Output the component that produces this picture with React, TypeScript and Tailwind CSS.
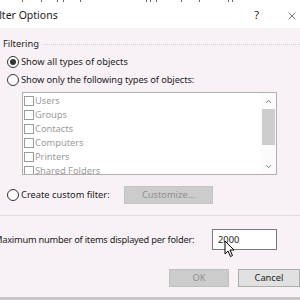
import { ChevronUp, ChevronDown, X } from "lucide-react";

const items = ["Users", "Groups", "Contacts", "Computers", "Printers", "Shared Folders"];

// bits of the window behind, peeking over the top edge
const marks = [22, 41, 57, 63, 80, 146, 150, 156, 181, 199, 228, 232];

function Radio({ checked }: { checked?: boolean }) {
  return (
    <span className="flex h-[12px] w-[12px] shrink-0 items-center justify-center rounded-full border border-[#333] bg-white">
      {checked && <span className="h-[6px] w-[6px] rounded-full bg-[#333]" />}
    </span>
  );
}

export default function App() {
  return (
    <div
      className="h-[300px] w-[300px] overflow-hidden bg-[#f8f2f6] text-[9.3px] text-[#1c1c1c]"
      style={{ fontFamily: '"Noto Sans", "Open Sans", sans-serif' }}
    >
      <div className="flex h-[3px] bg-white">
        {marks.map((x, i) => (
          <span
            key={i}
            className="h-[2px] w-[1px] bg-[#666]"
            style={{ marginLeft: i === 0 ? x : x - marks[i - 1] - 1 }}
          />
        ))}
      </div>

      {/* title bar */}
      <div className="flex h-[25px] items-center bg-white">
        <span className="-ml-[9px] text-[10.5px]">Filter Options</span>
        <span className="ml-auto text-[11px]">?</span>
        <X className="ml-[27px] mr-[2px] h-[12px] w-[12px]" strokeWidth={1.2} />
      </div>

      <div className="flex flex-col">
        {/* Filtering group */}
        <div className="mt-[9px] flex h-[14px] items-center pl-[3px]">
          <span>Filtering</span>
          <span className="ml-[4px] flex-1 border-t border-dotted border-[#d6d0d4]" />
        </div>

        <div className="mt-[2px] flex h-[18px] items-center gap-[2px] pl-[7px]">
          <Radio checked />
          <span>Show all types of objects</span>
        </div>
        <div className="flex h-[18px] items-center gap-[2px] pl-[7px]">
          <Radio />
          <span className="tracking-[-0.1px]">Show only the following types of objects:</span>
        </div>

        <div className="ml-[22px] mt-[3px] flex h-[83px] w-[255px] border border-[#b4b0b2] bg-white">
          <div className="flex flex-1 flex-col overflow-hidden pt-[1px]">
            {items.map((item) => (
              <div key={item} className="flex h-[14px] shrink-0 items-center gap-[1px] pl-[1px] text-[#9b9b9b]">
                <span className="h-[10px] w-[10px] shrink-0 border border-[#9b9b9b]" />
                <span>{item}</span>
              </div>
            ))}
          </div>
          <div className="flex w-[15px] flex-col items-center bg-[#fbfbfb]">
            <ChevronUp className="mt-[4px] h-[9px] w-[9px] text-[#555]" strokeWidth={2} />
            <div className="mt-[3px] h-[36px] w-[13px] bg-[#cdcdcd]" />
            <ChevronDown className="mb-[3px] mt-auto h-[9px] w-[9px] text-[#555]" strokeWidth={2} />
          </div>
        </div>

        <div className="mt-[11px] flex h-[18px] items-center pl-[7px]">
          <Radio />
          <span className="ml-[2px]">Create custom filter:</span>
          <div className="ml-auto mr-[87px] flex h-[18px] w-[89px] items-center justify-center border border-[#c4c4c4] bg-[#cccccc] text-[#8f8f8f]">
            Customize...
          </div>
        </div>

        <div className="mt-[11px] border-t border-[#e2dce0]" />

        <div className="mt-[13px] flex h-[21px] items-center">
          <span className="-ml-[6px] whitespace-nowrap tracking-[-0.25px]">Maximum number of items displayed per folder:</span>
          <div className="relative ml-auto mr-[23px] flex h-[21px] w-[65px] shrink-0 items-center border border-[#7a7a7a] bg-white pl-[5px]">
            2000
            <svg className="absolute left-[11px] top-[10px]" width="12" height="18" viewBox="0 0 12 18">
              <path d="M1 1 L1 14 L4 11 L6.5 16.5 L8.5 15.5 L6 10 L10 10 Z" fill="white" stroke="black" strokeWidth="1" />
            </svg>
          </div>
        </div>

        <div className="mt-[19px] flex h-[18px] items-center">
          <div className="ml-[169px] flex h-[18px] w-[63px] items-center justify-center border border-[#bfbfbf] bg-[#cccccc] text-[#8f8f8f]">
            OK
          </div>
          <div className="ml-[9px] flex h-[18px] w-[62px] shrink-0 items-center justify-center border border-[#adadad] bg-[#e1e1e1]">
            Cancel
          </div>
        </div>

        <div className="mt-[10px] h-[3px] bg-[#c8c6c8]" />
      </div>
    </div>
  );
}
